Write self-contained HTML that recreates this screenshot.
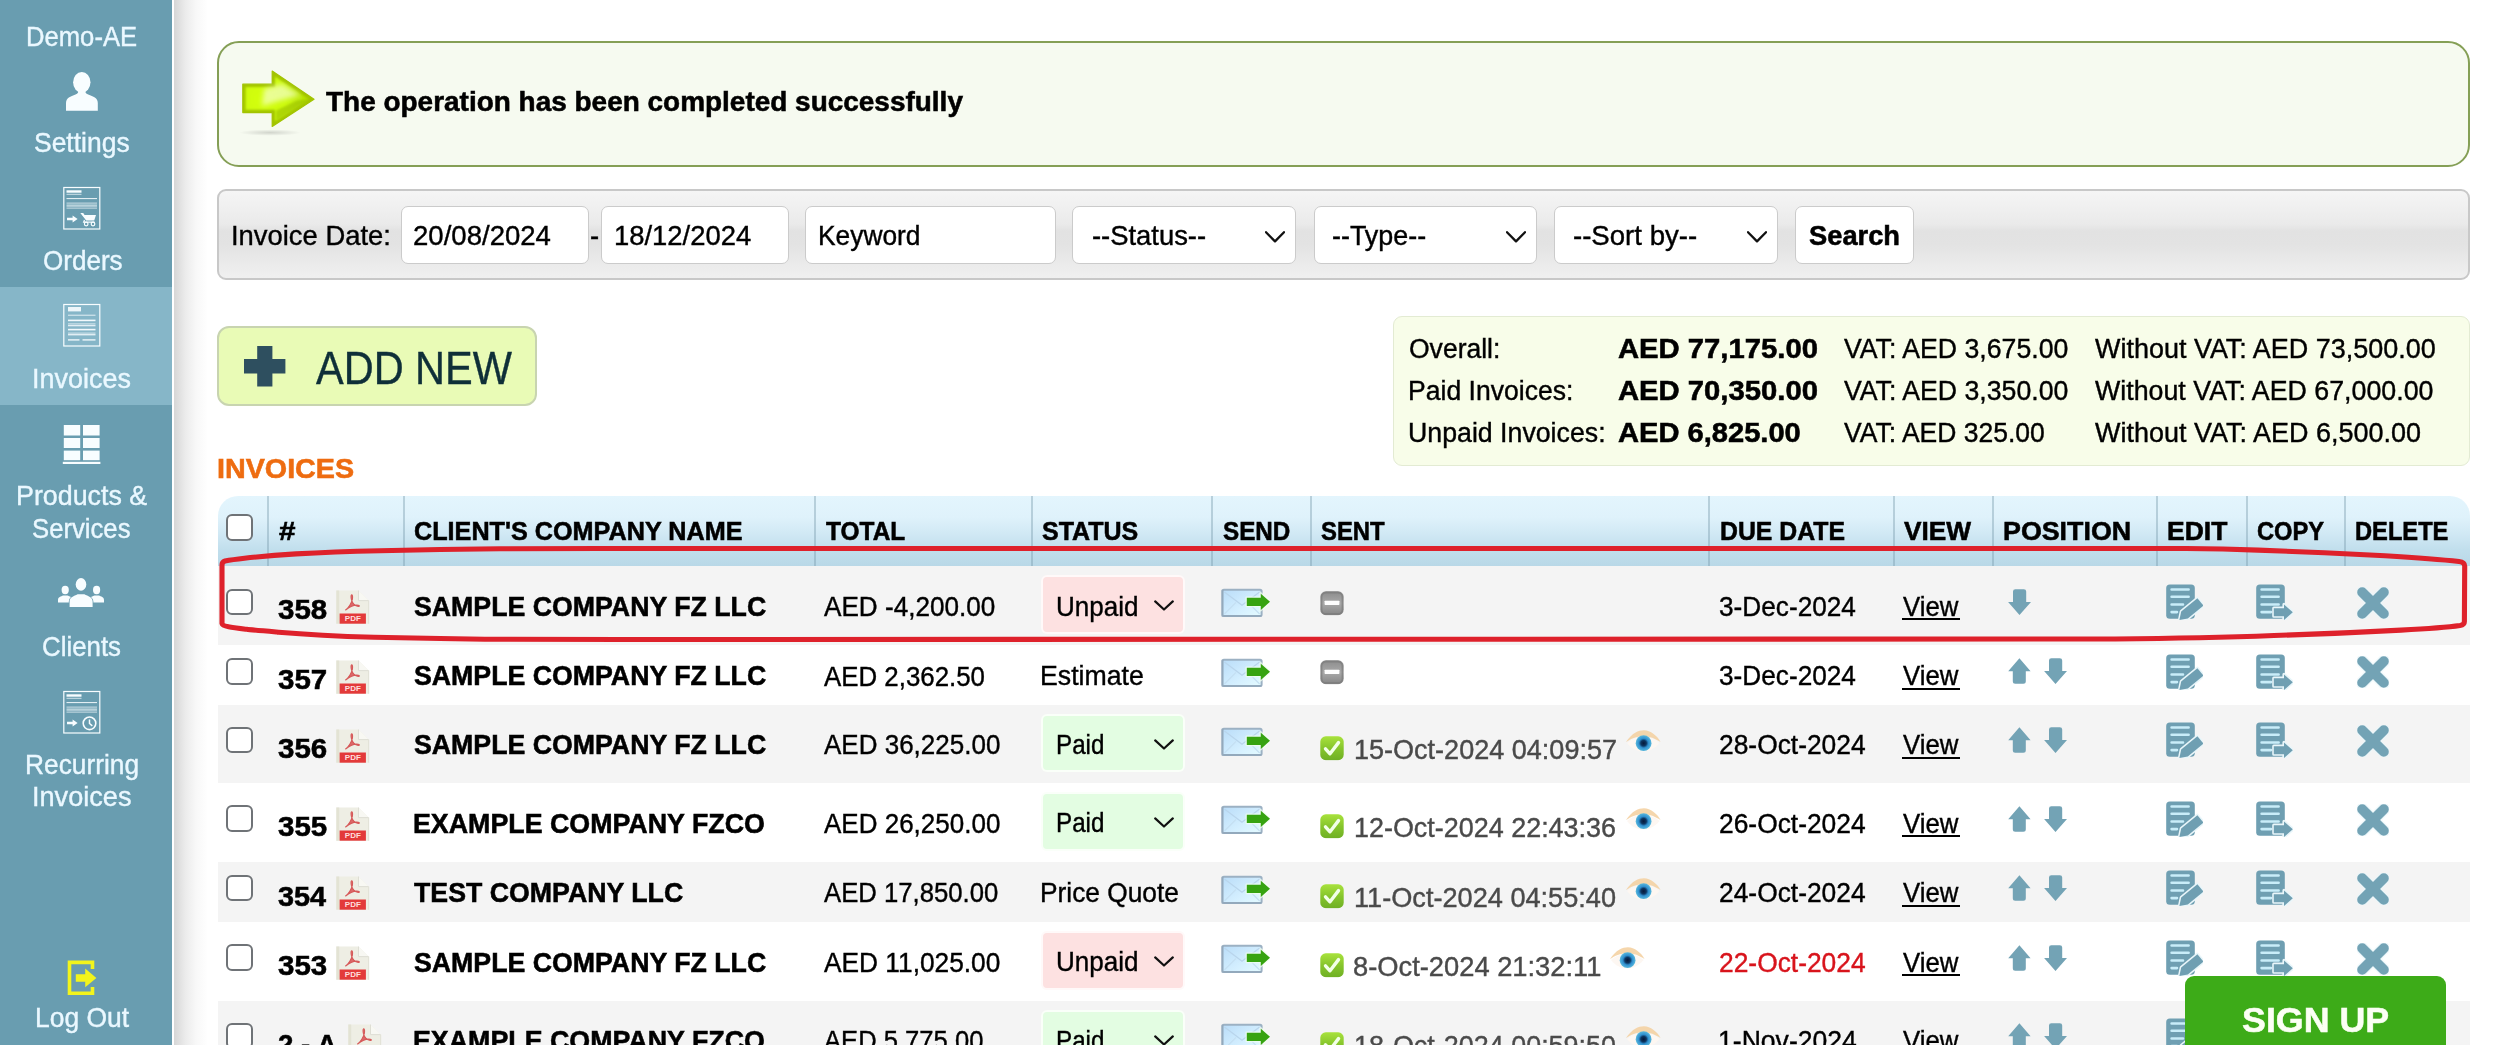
<!DOCTYPE html>
<html lang="en"><head><meta charset="utf-8"><title>Invoices</title>
<style>
html,body{margin:0;padding:0}
body{width:2515px;height:1045px;overflow:hidden;background:#fff;position:relative;
 font-family:"Liberation Sans",sans-serif;color:#000}
.a{position:absolute;box-sizing:border-box}
.t{position:absolute;white-space:nowrap;line-height:1;transform-origin:0 0;display:block;-webkit-text-stroke:.4px}
.t.b{-webkit-text-stroke:.55px}
.ul{position:absolute;height:2px;background:#000;display:block}
#side{left:0;top:0;width:172px;height:1045px;background:#699db0}
#act{left:0;top:287px;width:172px;height:118px;background:#86b6c8}
#shade{left:174px;top:0;width:34px;height:1045px;
 background:linear-gradient(90deg,#d6d6d6 0,#dedede 12%,#ececec 35%,#f8f8f8 65%,#fff 100%)}
#banner{left:217px;top:41px;width:2253px;height:125.5px;border:2px solid #859f56;border-radius:22px;background:#f6faf0}
#fbar{left:217px;top:189px;width:2253.4px;height:91.4px;border:2px solid #c8c8c8;border-radius:9px;
 background:linear-gradient(180deg,#f5f5f5 0,#eeeeee 25%,#eaeaea 38%,#e2e2e2 46%,#e3e3e3 62%,#eaeaea 82%,#f0f0f0 100%)}
.inp{background:#fff;border:1.5px solid #cbcbcb;border-radius:7px;top:205.5px;height:58px}
#addnew{left:217.2px;top:326px;width:320px;height:79.5px;border:2px solid #c8d4b0;border-radius:12px;background:#e9fbb6}
#sum{left:1392.5px;top:315.5px;width:1077.5px;height:150px;border:1.5px solid #e3ebd3;border-radius:9px;background:#f8fde9}
#thead{left:217.5px;top:496px;width:2252.5px;height:70px;border-radius:20px 20px 0 0;
 background:linear-gradient(180deg,#e3f5fd 0,#dff2fb 30%,#d0e8f4 55%,#c0deec 78%,#b9d8e7 100%)}
.sep{top:496px;width:2px;height:70px;background:rgba(125,158,175,.42)}
.row{left:217.5px;width:2252.5px;background:#f4f4f4}
.cb{left:226.4px;width:26.6px;height:26.6px;border:2.3px solid #6f7377;border-radius:6px;background:#fff}
.sel{left:1041.2px;width:143.4px;height:58.8px;border-radius:6px;border:2px solid rgba(255,255,255,.8)}
.sel.u{background:#fde1e1}
.sel.p{background:#e3fde2}
#signup{left:2185.4px;top:976px;width:260.8px;height:80px;border-radius:9px;background:#3dab18}
svg{position:absolute;overflow:visible}
</style></head><body>

<svg width="0" height="0" style="position:absolute">
<defs>
<linearGradient id="gArrow" x1="0" y1="0" x2="0" y2="1">
 <stop offset="0" stop-color="#a9d400"/><stop offset=".45" stop-color="#d6ff2a"/><stop offset="1" stop-color="#9fc800"/>
</linearGradient>
<linearGradient id="gEnv" x1="0" y1="0" x2="1" y2="1">
 <stop offset="0" stop-color="#b9dcf8"/><stop offset=".6" stop-color="#d4efff"/><stop offset="1" stop-color="#e4fbff"/>
</linearGradient>
<linearGradient id="gMinus" x1="0" y1="0" x2="0" y2="1">
 <stop offset="0" stop-color="#8c8c8c"/><stop offset=".5" stop-color="#a9a9a9"/><stop offset="1" stop-color="#858585"/>
</linearGradient>
<linearGradient id="gCheck" x1="0" y1="0" x2="0" y2="1">
 <stop offset="0" stop-color="#a8e23c"/><stop offset=".5" stop-color="#86c52c"/><stop offset="1" stop-color="#6fb024"/>
</linearGradient>
<radialGradient id="gIris" cx=".5" cy=".5" r=".5">
 <stop offset="0" stop-color="#06183a"/><stop offset=".35" stop-color="#0c3560"/><stop offset=".6" stop-color="#2f8fcf"/><stop offset="1" stop-color="#5ab8dc"/>
</radialGradient>

<symbol id="pdf" viewBox="0 0 34 34">
 <path d="M0.3 0.5H22.5L32.6 10.6V33.7H0.3Z" fill="#eeeee4"/>
 <path d="M0.3 0.5H3.2V33.7H0.3Z" fill="#e0e0cf" opacity=".8"/>
 <path d="M22.5 0.5L32.6 10.6H22.5Z" fill="#f8f8f3"/>
 <path d="M22.5 0.5V10.6H32.6" fill="none" stroke="#deded4" stroke-width="1"/>
 <path d="M32.6 10.6V33.7" fill="none" stroke="#e3e3d8" stroke-width="1.2"/>
 <path d="M9.6 20C12.6 17.6 15.2 13.6 16.3 9.6C16.8 7.4 16.6 4.9 15.8 4.8C14.9 4.7 14.8 7.2 15.5 9.8C16.6 13.6 19.2 16 22.4 16.4C23.6 16.5 23.8 15.4 22.4 15.2C19 14.7 14 16.2 9.6 20Z" fill="#dc6a6a" stroke="#d65a5a" stroke-width="1.1" stroke-linejoin="round"/>
 <rect x="3.6" y="23.5" width="26.3" height="10.2" fill="#e33a3a"/>
 <text x="16.8" y="31.4" font-family="Liberation Sans" font-weight="700" font-size="8" fill="#ffdede" text-anchor="middle">PDF</text>
</symbol>

<symbol id="send" viewBox="0 0 49 30">
 <rect x="1.4" y="1.7" width="39.2" height="26.2" rx="1.5" fill="url(#gEnv)" stroke="#9cb1c3" stroke-width="2"/>
 <path d="M1.4 27.9V1.7M0.6 27.9H40.6" fill="none" stroke="#8da3b6" stroke-width="2" opacity=".55"/>
 <path d="M3.4 4L21 17.2L38.6 4" fill="none" stroke="#b9d5ec" stroke-width="1.3"/>
 <path d="M3.4 26L15 14.4M38.6 26L27 14.4" fill="none" stroke="#c4dff2" stroke-width="1.1"/>
 <path d="M25.6 9.6H39.6V5.2L49.4 13.8L39.6 22.4V18.1H25.6Z" fill="#fff" opacity=".75" stroke="#f2fff0" stroke-width="2.2" stroke-linejoin="round"/>
 <path d="M25.8 9.7H39.8V5.7L49 13.8L39.8 21.9V18H25.8Z" fill="#37a311"/>
</symbol>

<symbol id="minus" viewBox="0 0 24 24.5">
 <rect x="0.3" y="0.3" width="23.4" height="23.9" rx="5.5" fill="url(#gMinus)"/>
 <rect x="1.6" y="1.6" width="20.8" height="21.3" rx="4.5" fill="none" stroke="#7a7a7a" stroke-width="1.6" opacity=".7"/>
 <rect x="4.6" y="9.7" width="14.8" height="4.2" rx=".6" fill="#fdfdfd"/>
</symbol>

<symbol id="check" viewBox="0 0 24 24.5">
 <rect x="0.3" y="0.3" width="23.4" height="23.9" rx="5.5" fill="url(#gCheck)"/>
 <path d="M5.5 12.8L10 17.8L18.5 6.6" fill="none" stroke="#f2ffe8" stroke-width="3.4" stroke-linecap="round" stroke-linejoin="round"/>
</symbol>

<symbol id="eye" viewBox="0 0 38 26">
 <path d="M2 13C8 4 15 1.2 20 1.3C26.5 1.5 32.8 6.4 36.6 13C31 9.6 26 7.2 19.2 7.2C12 7.2 7 9.8 2 13Z" fill="#f3cf9d" opacity=".85"/>
 <path d="M3 14C9 9 15 7.8 19.5 7.8C25 7.8 31 10 35.5 14C31 19.5 25 22.5 19.5 22.5C13 22.5 7 19 3 14Z" fill="#fdf7f2"/>
 <circle cx="19.6" cy="14.2" r="7.9" fill="url(#gIris)"/>
</symbol>

<symbol id="up" viewBox="0 0 23 26">
 <path d="M11.4 0.3L22.6 13.2H17.8V23.2Q17.8 25.7 15.3 25.7H7.3Q4.8 25.7 4.8 23.2V13.2H0.2Z" fill="#73a3b5"/>
</symbol>
<symbol id="down" viewBox="0 0 23 26">
 <path d="M11.5 26L23 13H18.2V2.6Q18.2 0.2 15.8 0.2H7.4Q5 0.2 5 2.6V13H0.1Z" fill="#73a3b5"/>
</symbol>

<symbol id="edit" viewBox="0 0 37 36">
 <rect x="0.2" y="0.4" width="28.6" height="34.4" rx="3.6" fill="#6f9fb2"/>
 <g stroke="#c9edf9" stroke-width="2.6" stroke-linecap="round">
  <path d="M5.6 5.5H22.6M5.6 12.8H22.6M5.6 20.5H17M5.6 28.1H11"/>
 </g>
 <path d="M13.4 36L15.2 27.4L31.4 14.2L37.6 21.6L21.8 34.6Z" fill="#6f9fb2" stroke="#e9f6fa" stroke-width="3" stroke-linejoin="round" paint-order="stroke"/>
</symbol>

<symbol id="copy" viewBox="0 0 37 36">
 <rect x="0.2" y="0.4" width="28.6" height="34.4" rx="3.6" fill="#6f9fb2"/>
 <g stroke="#c9edf9" stroke-width="2.6" stroke-linecap="round">
  <path d="M5.6 5.5H22.6M5.6 12.8H22.6M5.6 20.5H22.6M5.6 28.1H15"/>
 </g>
 <path d="M17.8 24.2H28V20.4L36.8 28.2L28 36V32.2H17.8Z" fill="#6f9fb2" stroke="#e9f6fa" stroke-width="3.2" stroke-linejoin="round" paint-order="stroke"/>
</symbol>

<symbol id="del" viewBox="0 0 32 32">
 <path d="M5.2 5.2L26.8 26.8M26.8 5.2L5.2 26.8" stroke="#e9f6fa" stroke-width="12.6" stroke-linecap="round" opacity=".7"/>
 <path d="M5.2 5.2L26.8 26.8M26.8 5.2L5.2 26.8" stroke="#73a3b5" stroke-width="10" stroke-linecap="round"/>
</symbol>

<symbol id="chev2" viewBox="0 0 20 12">
 <path d="M1.2 1.4L10 9.5L18.8 1.4" fill="none" stroke="#111" stroke-width="2.2" stroke-linecap="round" stroke-linejoin="round"/>
</symbol>
<symbol id="chev" viewBox="0 0 20 12">
 <path d="M1 1.2L10 10.4L19 1.2" fill="none" stroke="#111" stroke-width="2.3" stroke-linecap="round" stroke-linejoin="round"/>
</symbol>
</defs>
</svg>

<div class="a" id="side"></div><div class="a" id="act"></div><div class="a" id="shade"></div>
<svg style="left:60px;top:68px" width="44" height="46" viewBox="60 68 44 46">
 <ellipse cx="81.8" cy="82.3" rx="8.7" ry="10.4" fill="#f8fdff"/>
 <path d="M66 110.8V103C66 98 70.5 96.3 75.5 94.5C78 93.6 78.5 92 78.5 90H85.2C85.2 92 85.6 93.6 88.2 94.5C93.2 96.3 97.8 98 97.8 103V110.8Z" fill="#f8fdff"/>
</svg>
<svg style="left:60px;top:183.7px" width="44" height="50" viewBox="60 183.7 44 50">
<rect x="63.8" y="187.2" width="36" height="41.5" fill="none" stroke="#f8fdff" stroke-width="1.2"/>
<rect x="66.5" y="190.0" width="15" height="2.4" fill="#f8fdff"/>
<rect x="66.5" y="193.5" width="15" height="1" fill="#f8fdff" opacity=".7"/>
<rect x="66.5" y="197.7" width="30.5" height="1.1" fill="#f8fdff" opacity=".85"/>
<rect x="66.5" y="202.29999999999998" width="30.5" height="1" fill="#f8fdff" opacity=".7"/>
<rect x="66.5" y="204.1" width="30.5" height="2.4" fill="#f8fdff" opacity=".55"/>
<rect x="66.5" y="207.29999999999998" width="30.5" height="1" fill="#f8fdff" opacity=".7"/>
<path d="M67 217.5H72.6V215.1L77.6 218.7L72.6 222.29999999999998V219.89999999999998H67Z" fill="#f8fdff"/>
<path d="M80.3 212.7H83.2L84.6 214.7H96L94.2 220.1H86.2Z" fill="#f8fdff"/>
<path d="M84.5 219.7L83.6 221.89999999999998H94.5" fill="none" stroke="#f8fdff" stroke-width="1.2"/>
<circle cx="86.2" cy="223.7" r="1.8" fill="none" stroke="#f8fdff" stroke-width="1.2"/>
<circle cx="93" cy="223.7" r="1.8" fill="none" stroke="#f8fdff" stroke-width="1.2"/>
</svg>
<svg style="left:60px;top:301.2px" width="44" height="50" viewBox="60 301.2 44 50">
<rect x="63.8" y="304.7" width="36" height="41.5" fill="none" stroke="#f8fdff" stroke-width="1.2"/>
<rect x="68" y="307.2" width="13" height="4.4" fill="#f8fdff" opacity=".9"/>
<rect x="68" y="314.9" width="27.5" height="1" fill="#f8fdff" opacity="0.8"/>
<rect x="68" y="319.8" width="27.5" height="1.6" fill="#f8fdff" opacity="0.95"/>
<rect x="68" y="323.59999999999997" width="27.5" height="1" fill="#f8fdff" opacity="0.7"/>
<rect x="68" y="325.09999999999997" width="27.5" height="1.4" fill="#f8fdff" opacity="0.8"/>
<rect x="68" y="329.0" width="27.5" height="1.6" fill="#f8fdff" opacity="0.95"/>
<rect x="68" y="332.8" width="27.5" height="1" fill="#f8fdff" opacity="0.7"/>
<rect x="68" y="334.2" width="27.5" height="1.4" fill="#f8fdff" opacity="0.8"/>
<rect x="68" y="339.4" width="11.5" height="1.4" fill="#f8fdff" opacity=".9"/>
<rect x="82.5" y="339.4" width="13" height="1.4" fill="#f8fdff" opacity=".9"/>
</svg>
<svg style="left:60px;top:687.8px" width="44" height="50" viewBox="60 687.8 44 50">
<rect x="63.8" y="691.3" width="36" height="41.5" fill="none" stroke="#f8fdff" stroke-width="1.2"/>
<rect x="66.5" y="694.0999999999999" width="15" height="2.4" fill="#f8fdff"/>
<rect x="66.5" y="697.5999999999999" width="15" height="1" fill="#f8fdff" opacity=".7"/>
<rect x="66.5" y="701.8" width="30.5" height="1.1" fill="#f8fdff" opacity=".85"/>
<rect x="66.5" y="706.4" width="30.5" height="1" fill="#f8fdff" opacity=".7"/>
<rect x="66.5" y="708.1999999999999" width="30.5" height="2.4" fill="#f8fdff" opacity=".55"/>
<rect x="66.5" y="711.4" width="30.5" height="1" fill="#f8fdff" opacity=".7"/>
<path d="M67 721.5999999999999H72.6V719.1999999999999L77.6 722.8L72.6 726.4V724.0H67Z" fill="#f8fdff"/>
<circle cx="89.5" cy="723.0999999999999" r="6.3" fill="none" stroke="#f8fdff" stroke-width="1.6"/>
<path d="M89.5 719.1999999999999V723.3L92.3 725.5999999999999" fill="none" stroke="#f8fdff" stroke-width="1.5"/>
</svg>
<svg style="left:60px;top:422px" width="44" height="46" viewBox="60 422 44 46">
<rect x="63.8" y="425" width="16.4" height="10.5" fill="#f8fdff"/>
<rect x="63.8" y="438" width="16.4" height="10" fill="#f8fdff"/>
<rect x="63.8" y="450.6" width="16.4" height="9.6" fill="#f8fdff"/>
<rect x="83" y="425" width="16.6" height="10.5" fill="#f8fdff"/>
<rect x="83" y="438" width="16.6" height="10" fill="#f8fdff"/>
<rect x="83" y="450.6" width="16.6" height="9.6" fill="#f8fdff"/>
<rect x="62.8" y="461.8" width="37.6" height="2.2" fill="#f8fdff"/>
</svg>
<svg style="left:54px;top:574px" width="56" height="40" viewBox="54 574 56 40">
 <g fill="#f8fdff">
 <ellipse cx="65.2" cy="590" rx="3.6" ry="4.2"/>
 <path d="M58 602.4V600C58 597 61 596.6 63.2 595.6H67.4C69.6 596.6 72.6 597 72.6 600V602.4Z"/>
 <ellipse cx="96.6" cy="590" rx="3.6" ry="4.2"/>
 <path d="M89.4 602.4V600C89.4 597 92.4 596.6 94.6 595.6H98.8C101 596.6 104 597 104 600V602.4Z"/>
 </g>
 <g fill="#f8fdff" stroke="#699db0" stroke-width="1.6" paint-order="stroke">
 <ellipse cx="81" cy="584.4" rx="5.3" ry="6.3"/>
 <path d="M69.6 607V601.5C69.6 597 74 596 77.6 594.2H84.4C88 596 92.6 597 92.6 601.5V607Z"/>
 </g>
</svg>
<svg style="left:62px;top:955px" width="40" height="46" viewBox="62 955 40 46">
 <path d="M92.5 969V962.4H69.5V993.2H92.5V987" fill="none" stroke="#f2f41c" stroke-width="3.6"/>
 <path d="M75.8 974.2H85.2V968.6L96.4 978L85.2 987.2V981.8H75.8Z" fill="#f2f41c"/>
</svg>
<div class="a" id="banner"></div>
<svg style="left:236px;top:62px" width="90" height="80" viewBox="236 62 90 80">
 <defs><radialGradient id="gSh"><stop offset="0" stop-color="#000" stop-opacity=".15"/><stop offset="1" stop-color="#000" stop-opacity="0"/></radialGradient>
 <radialGradient id="gAin" cx="262" cy="99" r="46" gradientUnits="userSpaceOnUse"><stop offset="0" stop-color="#d4ff12"/><stop offset=".55" stop-color="#ccfa0c"/><stop offset="1" stop-color="#b4de04"/></radialGradient>
 <filter id="fBl" x="-30%" y="-30%" width="160%" height="160%"><feGaussianBlur stdDeviation="2.6"/></filter>
 <filter id="fBl2" x="-30%" y="-30%" width="160%" height="160%"><feGaussianBlur stdDeviation="1.2"/></filter></defs>
 <ellipse cx="270" cy="132.6" rx="31" ry="3.2" fill="url(#gSh)"/>
 <path d="M242.8 84.2H272.2V71L314 99.3L272.2 126.4V112.6H242.8Z" fill="#a2c400" stroke="#a2c400" stroke-width="1.2" stroke-linejoin="round"/>
 <path d="M245.6 87H275V76.4L309 99.3L275 121.2V109.8H245.6Z" fill="url(#gAin)" filter="url(#fBl2)"/>
 <path d="M276 110.5L297 100.4L309 99.4L276 120.6Z" fill="#9abe00" opacity=".6" filter="url(#fBl2)"/>
 <path d="M264 89L282 84L300 95L282 100L262 106Z" fill="#fff" opacity=".55" filter="url(#fBl)"/>
</svg>
<div class="a" id="fbar"></div>
<div class="a inp" style="left:401px;width:187.5px"></div>
<div class="a inp" style="left:601.2px;width:187.5px"></div>
<div class="a inp" style="left:805.2px;width:250.5px"></div>
<div class="a inp" style="left:1072.3px;width:224px"></div>
<div class="a inp" style="left:1313.6px;width:223.5px"></div>
<div class="a inp" style="left:1554.4px;width:224px"></div>
<div class="a inp" style="left:1794.8px;width:118.8px"></div>
<svg style="left:1264.5px;top:230.6px" width="20" height="12"><use href="#chev" width="20" height="12"/></svg>
<svg style="left:1506.0px;top:230.6px" width="20" height="12"><use href="#chev" width="20" height="12"/></svg>
<svg style="left:1747.0px;top:230.6px" width="20" height="12"><use href="#chev" width="20" height="12"/></svg>
<div class="a" id="addnew"></div>
<svg style="left:243.8px;top:346px" width="42" height="41"><path d="M13.2 0H28.4V13H41.4V27.6H28.4V40.6H13.2V27.6H0V13H13.2Z" fill="#2e4f5f"/></svg>
<div class="a" id="sum"></div>
<div class="a" id="thead"></div>
<div class="a sep" style="left:267px"></div>
<div class="a sep" style="left:403px"></div>
<div class="a sep" style="left:814px"></div>
<div class="a sep" style="left:1031px"></div>
<div class="a sep" style="left:1211px"></div>
<div class="a sep" style="left:1310px"></div>
<div class="a sep" style="left:1708px"></div>
<div class="a sep" style="left:1893px"></div>
<div class="a sep" style="left:1992px"></div>
<div class="a sep" style="left:2156px"></div>
<div class="a sep" style="left:2246px"></div>
<div class="a sep" style="left:2344px"></div>
<div class="a cb" style="top:514.4px"></div>
<div class="a row" style="top:565.8px;height:79.5px"></div>
<div class="a cb" style="top:588.5px"></div>
<svg style="left:336.0px;top:590.1px" width="34" height="34"><use href="#pdf" width="34" height="34"/></svg>
<div class="a sel u" style="top:575.2px"></div>
<svg style="left:1154.3px;top:600.3px" width="20" height="12"><use href="#chev2" width="20" height="12"/></svg>
<svg style="left:1220.6px;top:588.3px" width="49" height="30"><use href="#send" width="49" height="30"/></svg>
<svg style="left:1320.0px;top:590.8px" width="24" height="24.5"><use href="#minus" width="24" height="24.5"/></svg>
<svg style="left:2008.0px;top:588.8px" width="23" height="26"><use href="#down" width="23" height="26"/></svg>
<svg style="left:2165.7px;top:583.9px" width="37" height="36"><use href="#edit" width="37" height="36"/></svg>
<svg style="left:2255.7px;top:583.9px" width="37" height="36"><use href="#copy" width="37" height="36"/></svg>
<svg style="left:2356.8px;top:586.8px" width="32" height="32"><use href="#del" width="32" height="32"/></svg>
<div class="a cb" style="top:658.1px"></div>
<svg style="left:336.0px;top:659.7px" width="34" height="34"><use href="#pdf" width="34" height="34"/></svg>
<svg style="left:1220.6px;top:657.9px" width="49" height="30"><use href="#send" width="49" height="30"/></svg>
<svg style="left:1320.0px;top:660.3px" width="24" height="24.5"><use href="#minus" width="24" height="24.5"/></svg>
<svg style="left:2008.0px;top:658.3px" width="23" height="26"><use href="#up" width="23" height="26"/></svg>
<svg style="left:2043.8px;top:658.3px" width="23" height="26"><use href="#down" width="23" height="26"/></svg>
<svg style="left:2165.7px;top:653.5px" width="37" height="36"><use href="#edit" width="37" height="36"/></svg>
<svg style="left:2255.7px;top:653.5px" width="37" height="36"><use href="#copy" width="37" height="36"/></svg>
<svg style="left:2356.8px;top:656.3px" width="32" height="32"><use href="#del" width="32" height="32"/></svg>
<div class="a row" style="top:704.9px;height:78.0px"></div>
<div class="a cb" style="top:726.9px"></div>
<svg style="left:336.0px;top:728.5px" width="34" height="34"><use href="#pdf" width="34" height="34"/></svg>
<div class="a sel p" style="top:713.6px"></div>
<svg style="left:1154.3px;top:738.7px" width="20" height="12"><use href="#chev2" width="20" height="12"/></svg>
<svg style="left:1220.6px;top:726.7px" width="49" height="30"><use href="#send" width="49" height="30"/></svg>
<svg style="left:1320.1px;top:736.0px" width="24" height="24.5"><use href="#check" width="24" height="24.5"/></svg>
<svg style="left:1624.0px;top:728.7px" width="38" height="26"><use href="#eye" width="38" height="26"/></svg>
<svg style="left:2008.0px;top:727.1px" width="23" height="26"><use href="#up" width="23" height="26"/></svg>
<svg style="left:2043.8px;top:727.1px" width="23" height="26"><use href="#down" width="23" height="26"/></svg>
<svg style="left:2165.7px;top:722.3px" width="37" height="36"><use href="#edit" width="37" height="36"/></svg>
<svg style="left:2255.7px;top:722.3px" width="37" height="36"><use href="#copy" width="37" height="36"/></svg>
<svg style="left:2356.8px;top:725.1px" width="32" height="32"><use href="#del" width="32" height="32"/></svg>
<div class="a cb" style="top:805.3px"></div>
<svg style="left:336.0px;top:806.9px" width="34" height="34"><use href="#pdf" width="34" height="34"/></svg>
<div class="a sel p" style="top:792.0px"></div>
<svg style="left:1154.3px;top:817.1px" width="20" height="12"><use href="#chev2" width="20" height="12"/></svg>
<svg style="left:1220.6px;top:805.1px" width="49" height="30"><use href="#send" width="49" height="30"/></svg>
<svg style="left:1320.1px;top:814.4px" width="24" height="24.5"><use href="#check" width="24" height="24.5"/></svg>
<svg style="left:1624.0px;top:807.1px" width="38" height="26"><use href="#eye" width="38" height="26"/></svg>
<svg style="left:2008.0px;top:805.5px" width="23" height="26"><use href="#up" width="23" height="26"/></svg>
<svg style="left:2043.8px;top:805.5px" width="23" height="26"><use href="#down" width="23" height="26"/></svg>
<svg style="left:2165.7px;top:800.7px" width="37" height="36"><use href="#edit" width="37" height="36"/></svg>
<svg style="left:2255.7px;top:800.7px" width="37" height="36"><use href="#copy" width="37" height="36"/></svg>
<svg style="left:2356.8px;top:803.5px" width="32" height="32"><use href="#del" width="32" height="32"/></svg>
<div class="a row" style="top:861.8px;height:59.80000000000007px"></div>
<div class="a cb" style="top:874.7px"></div>
<svg style="left:336.0px;top:876.3px" width="34" height="34"><use href="#pdf" width="34" height="34"/></svg>
<svg style="left:1220.6px;top:874.5px" width="49" height="30"><use href="#send" width="49" height="30"/></svg>
<svg style="left:1320.1px;top:883.8px" width="24" height="24.5"><use href="#check" width="24" height="24.5"/></svg>
<svg style="left:1624.0px;top:876.5px" width="38" height="26"><use href="#eye" width="38" height="26"/></svg>
<svg style="left:2008.0px;top:874.9px" width="23" height="26"><use href="#up" width="23" height="26"/></svg>
<svg style="left:2043.8px;top:874.9px" width="23" height="26"><use href="#down" width="23" height="26"/></svg>
<svg style="left:2165.7px;top:870.1px" width="37" height="36"><use href="#edit" width="37" height="36"/></svg>
<svg style="left:2255.7px;top:870.1px" width="37" height="36"><use href="#copy" width="37" height="36"/></svg>
<svg style="left:2356.8px;top:872.9px" width="32" height="32"><use href="#del" width="32" height="32"/></svg>
<div class="a cb" style="top:944.3px"></div>
<svg style="left:336.0px;top:945.9px" width="34" height="34"><use href="#pdf" width="34" height="34"/></svg>
<div class="a sel u" style="top:931.0px"></div>
<svg style="left:1154.3px;top:956.1px" width="20" height="12"><use href="#chev2" width="20" height="12"/></svg>
<svg style="left:1220.6px;top:944.1px" width="49" height="30"><use href="#send" width="49" height="30"/></svg>
<svg style="left:1320.1px;top:953.4px" width="24" height="24.5"><use href="#check" width="24" height="24.5"/></svg>
<svg style="left:1608.2px;top:946.1px" width="38" height="26"><use href="#eye" width="38" height="26"/></svg>
<svg style="left:2008.0px;top:944.5px" width="23" height="26"><use href="#up" width="23" height="26"/></svg>
<svg style="left:2043.8px;top:944.5px" width="23" height="26"><use href="#down" width="23" height="26"/></svg>
<svg style="left:2165.7px;top:939.7px" width="37" height="36"><use href="#edit" width="37" height="36"/></svg>
<svg style="left:2255.7px;top:939.7px" width="37" height="36"><use href="#copy" width="37" height="36"/></svg>
<svg style="left:2356.8px;top:942.5px" width="32" height="32"><use href="#del" width="32" height="32"/></svg>
<div class="a row" style="top:1001px;height:77.59999999999991px"></div>
<div class="a cb" style="top:1022.8px"></div>
<svg style="left:348.0px;top:1024.4px" width="34" height="34"><use href="#pdf" width="34" height="34"/></svg>
<div class="a sel p" style="top:1009.5px"></div>
<svg style="left:1154.3px;top:1034.6px" width="20" height="12"><use href="#chev2" width="20" height="12"/></svg>
<svg style="left:1220.6px;top:1022.6px" width="49" height="30"><use href="#send" width="49" height="30"/></svg>
<svg style="left:1320.1px;top:1031.9px" width="24" height="24.5"><use href="#check" width="24" height="24.5"/></svg>
<svg style="left:1624.0px;top:1024.6px" width="38" height="26"><use href="#eye" width="38" height="26"/></svg>
<svg style="left:2008.0px;top:1023.0px" width="23" height="26"><use href="#up" width="23" height="26"/></svg>
<svg style="left:2043.8px;top:1023.0px" width="23" height="26"><use href="#down" width="23" height="26"/></svg>
<svg style="left:2165.7px;top:1018.2px" width="37" height="36"><use href="#edit" width="37" height="36"/></svg>
<svg style="left:2255.7px;top:1018.2px" width="37" height="36"><use href="#copy" width="37" height="36"/></svg>
<svg style="left:2356.8px;top:1021.0px" width="32" height="32"><use href="#del" width="32" height="32"/></svg>
<span class="t" style="left:25.63px;top:23.00px;font-size:27.4px;color:#eaf8ff;transform:scaleX(0.9359);">Demo-AE</span>
<span class="t" style="left:33.53px;top:128.60px;font-size:27.4px;color:#eaf8ff;transform:scaleX(0.9662);">Settings</span>
<span class="t" style="left:42.55px;top:247.00px;font-size:27.4px;color:#eaf8ff;transform:scaleX(0.9509);">Orders</span>
<span class="t" style="left:31.73px;top:365.30px;font-size:27.4px;color:#eaf8ff;transform:scaleX(0.9848);">Invoices</span>
<span class="t" style="left:15.94px;top:482.30px;font-size:27.4px;color:#eaf8ff;transform:scaleX(0.9794);">Products &amp;</span>
<span class="t" style="left:32.16px;top:515.40px;font-size:27.4px;color:#eaf8ff;transform:scaleX(0.9377);">Services</span>
<span class="t" style="left:42.16px;top:632.70px;font-size:27.4px;color:#eaf8ff;transform:scaleX(0.9435);">Clients</span>
<span class="t" style="left:24.58px;top:750.80px;font-size:27.4px;color:#eaf8ff;transform:scaleX(0.9609);">Recurring</span>
<span class="t" style="left:32.12px;top:783.40px;font-size:27.4px;color:#eaf8ff;transform:scaleX(0.9899);">Invoices</span>
<span class="t" style="left:34.57px;top:1004.40px;font-size:27.4px;color:#eaf8ff;transform:scaleX(0.9650);">Log Out</span>
<span class="t b" style="left:325.80px;top:87.70px;font-size:27.4px;font-weight:700;transform:scaleX(1.0206);">The operation has been completed successfully</span>
<span class="t" style="left:231.20px;top:222.00px;font-size:27.4px;transform:scaleX(1.0002);">Invoice Date:</span>
<span class="t" style="left:413.49px;top:222.00px;font-size:27.4px;transform:scaleX(1.0062);">20/08/2024</span>
<span class="t" style="left:589.50px;top:222.00px;font-size:27.4px;transform:scaleX(0.9995);">-</span>
<span class="t" style="left:614.20px;top:222.00px;font-size:27.4px;transform:scaleX(1.0010);">18/12/2024</span>
<span class="t" style="left:817.58px;top:222.00px;font-size:27.4px;transform:scaleX(0.9618);">Keyword</span>
<span class="t" style="left:1091.50px;top:222.00px;font-size:27.4px;transform:scaleX(0.9998);">--Status--</span>
<span class="t" style="left:1332.22px;top:222.00px;font-size:27.4px;transform:scaleX(0.9824);">--Type--</span>
<span class="t" style="left:1573.49px;top:222.00px;font-size:27.4px;transform:scaleX(1.0071);">--Sort by--</span>
<span class="t b" style="left:1808.50px;top:222.00px;font-size:27.4px;font-weight:700;transform:scaleX(0.9962);">Search</span>
<span class="t" style="left:315.50px;top:344.70px;font-size:46.5px;color:#0f2f38;transform:scaleX(0.8921);">ADD NEW</span>
<span class="t b" style="left:216.95px;top:454.50px;font-size:27.4px;font-weight:700;color:#ee6c10;transform:scaleX(1.0475);">INVOICES</span>
<span class="t" style="left:1409.42px;top:336.30px;font-size:27.0px;transform:scaleX(0.9820);">Overall:</span>
<span class="t" style="left:1408.43px;top:378.40px;font-size:27.0px;transform:scaleX(0.9836);">Paid Invoices:</span>
<span class="t" style="left:1408.42px;top:419.80px;font-size:27.0px;transform:scaleX(0.9897);">Unpaid Invoices:</span>
<span class="t b" style="left:1617.50px;top:336.30px;font-size:27.0px;font-weight:700;transform:scaleX(1.0827);">AED 77,175.00</span>
<span class="t b" style="left:1617.50px;top:378.40px;font-size:27.0px;font-weight:700;transform:scaleX(1.0827);">AED 70,350.00</span>
<span class="t b" style="left:1617.50px;top:419.80px;font-size:27.0px;font-weight:700;transform:scaleX(1.0777);">AED 6,825.00</span>
<span class="t" style="left:1844.40px;top:336.30px;font-size:27.0px;transform:scaleX(0.9875);">VAT: AED 3,675.00</span>
<span class="t" style="left:1844.40px;top:378.40px;font-size:27.0px;transform:scaleX(0.9875);">VAT: AED 3,350.00</span>
<span class="t" style="left:1844.40px;top:419.80px;font-size:27.0px;transform:scaleX(0.9813);">VAT: AED 325.00</span>
<span class="t" style="left:2094.80px;top:336.30px;font-size:27.0px;transform:scaleX(0.9986);">Without VAT: AED 73,500.00</span>
<span class="t" style="left:2094.80px;top:378.40px;font-size:27.0px;transform:scaleX(0.9921);">Without VAT: AED 67,000.00</span>
<span class="t" style="left:2094.80px;top:419.80px;font-size:27.0px;transform:scaleX(0.9992);">Without VAT: AED 6,500.00</span>
<span class="t b" style="left:279.40px;top:519.00px;font-size:25.8px;font-weight:700;transform:scaleX(1.1490);">#</span>
<span class="t b" style="left:413.52px;top:519.00px;font-size:25.8px;font-weight:700;transform:scaleX(0.9768);">CLIENT'S COMPANY NAME</span>
<span class="t b" style="left:825.50px;top:519.00px;font-size:25.8px;font-weight:700;transform:scaleX(0.9477);">TOTAL</span>
<span class="t b" style="left:1041.80px;top:519.00px;font-size:25.8px;font-weight:700;transform:scaleX(0.9692);">STATUS</span>
<span class="t b" style="left:1223.10px;top:519.00px;font-size:25.8px;font-weight:700;transform:scaleX(0.9401);">SEND</span>
<span class="t b" style="left:1321.10px;top:519.00px;font-size:25.8px;font-weight:700;transform:scaleX(0.9254);">SENT</span>
<span class="t b" style="left:1719.54px;top:519.00px;font-size:25.8px;font-weight:700;transform:scaleX(0.9616);">DUE DATE</span>
<span class="t b" style="left:1904.00px;top:519.00px;font-size:25.8px;font-weight:700;transform:scaleX(1.0167);">VIEW</span>
<span class="t b" style="left:2003.06px;top:519.00px;font-size:25.8px;font-weight:700;transform:scaleX(1.0394);">POSITION</span>
<span class="t b" style="left:2167.07px;top:519.00px;font-size:25.8px;font-weight:700;transform:scaleX(1.0274);">EDIT</span>
<span class="t b" style="left:2256.98px;top:519.00px;font-size:25.8px;font-weight:700;transform:scaleX(0.9179);">COPY</span>
<span class="t b" style="left:2354.78px;top:519.00px;font-size:25.8px;font-weight:700;transform:scaleX(0.9179);">DELETE</span>
<span class="t b" style="left:277.80px;top:596.35px;font-size:27.4px;font-weight:700;transform:scaleX(1.0754);">358</span>
<span class="t b" style="left:413.50px;top:592.85px;font-size:27.3px;font-weight:700;transform:scaleX(0.9785);">SAMPLE COMPANY FZ LLC</span>
<span class="t" style="left:824.30px;top:593.05px;font-size:27.3px;transform:scaleX(0.9571);">AED -4,200.00</span>
<span class="t" style="left:1055.79px;top:592.55px;font-size:27.3px;transform:scaleX(0.9528);">Unpaid</span>
<span class="t" style="left:1718.94px;top:592.75px;font-size:27.3px;transform:scaleX(0.9600);">3-Dec-2024</span>
<span class="t" style="left:1903.00px;top:592.75px;font-size:27.3px;transform:scaleX(0.9445);">View</span><i class="ul" style="left:1902.0px;top:618.4px;width:57.7px"></i>
<span class="t b" style="left:277.80px;top:665.90px;font-size:27.4px;font-weight:700;transform:scaleX(1.0754);">357</span>
<span class="t b" style="left:413.50px;top:662.40px;font-size:27.3px;font-weight:700;transform:scaleX(0.9785);">SAMPLE COMPANY FZ LLC</span>
<span class="t" style="left:824.30px;top:662.60px;font-size:27.3px;transform:scaleX(0.9471);">AED 2,362.50</span>
<span class="t" style="left:1039.85px;top:662.10px;font-size:27.3px;transform:scaleX(0.9775);">Estimate</span>
<span class="t" style="left:1718.94px;top:662.30px;font-size:27.3px;transform:scaleX(0.9600);">3-Dec-2024</span>
<span class="t" style="left:1903.00px;top:662.30px;font-size:27.3px;transform:scaleX(0.9445);">View</span><i class="ul" style="left:1902.0px;top:687.9px;width:57.7px"></i>
<span class="t b" style="left:277.80px;top:734.70px;font-size:27.4px;font-weight:700;transform:scaleX(1.0754);">356</span>
<span class="t b" style="left:413.50px;top:731.20px;font-size:27.3px;font-weight:700;transform:scaleX(0.9785);">SAMPLE COMPANY FZ LLC</span>
<span class="t" style="left:824.30px;top:731.40px;font-size:27.3px;transform:scaleX(0.9526);">AED 36,225.00</span>
<span class="t" style="left:1055.93px;top:730.90px;font-size:27.3px;transform:scaleX(0.8861);">Paid</span>
<span class="t" style="left:1353.73px;top:735.70px;font-size:27.4px;color:#4a4a4a;transform:scaleX(0.9869);">15-Oct-2024 04:09:57</span>
<span class="t" style="left:1718.93px;top:731.10px;font-size:27.3px;transform:scaleX(0.9664);">28-Oct-2024</span>
<span class="t" style="left:1903.00px;top:731.10px;font-size:27.3px;transform:scaleX(0.9445);">View</span><i class="ul" style="left:1902.0px;top:756.7px;width:57.7px"></i>
<span class="t b" style="left:277.80px;top:813.15px;font-size:27.4px;font-weight:700;transform:scaleX(1.0754);">355</span>
<span class="t b" style="left:412.52px;top:809.65px;font-size:27.3px;font-weight:700;transform:scaleX(0.9816);">EXAMPLE COMPANY FZCO</span>
<span class="t" style="left:824.30px;top:809.85px;font-size:27.3px;transform:scaleX(0.9526);">AED 26,250.00</span>
<span class="t" style="left:1055.93px;top:809.35px;font-size:27.3px;transform:scaleX(0.8861);">Paid</span>
<span class="t" style="left:1353.73px;top:814.15px;font-size:27.4px;color:#4a4a4a;transform:scaleX(0.9832);">12-Oct-2024 22:43:36</span>
<span class="t" style="left:1718.93px;top:809.55px;font-size:27.3px;transform:scaleX(0.9664);">26-Oct-2024</span>
<span class="t" style="left:1903.00px;top:809.55px;font-size:27.3px;transform:scaleX(0.9445);">View</span><i class="ul" style="left:1902.0px;top:835.1px;width:57.7px"></i>
<span class="t b" style="left:277.80px;top:882.50px;font-size:27.4px;font-weight:700;transform:scaleX(1.0523);">354</span>
<span class="t b" style="left:413.50px;top:879.00px;font-size:27.3px;font-weight:700;transform:scaleX(0.9789);">TEST COMPANY LLC</span>
<span class="t" style="left:824.30px;top:879.20px;font-size:27.3px;transform:scaleX(0.9417);">AED 17,850.00</span>
<span class="t" style="left:1039.87px;top:878.70px;font-size:27.3px;transform:scaleX(0.9634);">Price Quote</span>
<span class="t" style="left:1353.72px;top:883.50px;font-size:27.4px;color:#4a4a4a;transform:scaleX(0.9908);">11-Oct-2024 04:55:40</span>
<span class="t" style="left:1718.93px;top:878.90px;font-size:27.3px;transform:scaleX(0.9664);">24-Oct-2024</span>
<span class="t" style="left:1903.00px;top:878.90px;font-size:27.3px;transform:scaleX(0.9445);">View</span><i class="ul" style="left:1902.0px;top:904.5px;width:57.7px"></i>
<span class="t b" style="left:277.80px;top:952.10px;font-size:27.4px;font-weight:700;transform:scaleX(1.0754);">353</span>
<span class="t b" style="left:413.50px;top:948.60px;font-size:27.3px;font-weight:700;transform:scaleX(0.9785);">SAMPLE COMPANY FZ LLC</span>
<span class="t" style="left:824.30px;top:948.80px;font-size:27.3px;transform:scaleX(0.9631);">AED 11,025.00</span>
<span class="t" style="left:1055.79px;top:948.30px;font-size:27.3px;transform:scaleX(0.9528);">Unpaid</span>
<span class="t" style="left:1352.50px;top:953.10px;font-size:27.4px;color:#4a4a4a;transform:scaleX(0.9968);">8-Oct-2024 21:32:11</span>
<span class="t" style="left:1718.93px;top:948.50px;font-size:27.3px;color:#d8141c;transform:scaleX(0.9664);">22-Oct-2024</span>
<span class="t" style="left:1903.00px;top:948.50px;font-size:27.3px;transform:scaleX(0.9445);">View</span><i class="ul" style="left:1902.0px;top:974.1px;width:57.7px"></i>
<span class="t b" style="left:277.80px;top:1030.60px;font-size:27.4px;font-weight:700;transform:scaleX(1.0092);">2 - A</span>
<span class="t b" style="left:412.52px;top:1027.10px;font-size:27.3px;font-weight:700;transform:scaleX(0.9816);">EXAMPLE COMPANY FZCO</span>
<span class="t" style="left:824.30px;top:1027.30px;font-size:27.3px;transform:scaleX(0.9376);">AED 5,775.00</span>
<span class="t" style="left:1055.93px;top:1026.80px;font-size:27.3px;transform:scaleX(0.8861);">Paid</span>
<span class="t" style="left:1353.73px;top:1031.60px;font-size:27.4px;color:#4a4a4a;transform:scaleX(0.9832);">18-Oct-2024 00:59:50</span>
<span class="t" style="left:1717.95px;top:1027.00px;font-size:27.3px;transform:scaleX(0.9739);">1-Nov-2024</span>
<span class="t" style="left:1903.00px;top:1027.00px;font-size:27.3px;transform:scaleX(0.9445);">View</span><i class="ul" style="left:1902.0px;top:1052.6px;width:57.7px"></i>
<svg style="left:0;top:0" width="2515" height="1045" viewBox="0 0 2515 1045">
 <path d="M222 623.6 L222 565 Q222 562 225 561 C232 559.6 240 558.7 244.5 558.2 C262 556.3 280 554.9 296 553.9 C320 552.6 350 551.5 380 550.8 C420 549.7 460 549 500 548.7 L600 548.5 L2186 548.5 C2215 548.7 2240 549.4 2258 550.1 C2290 551.2 2350 553.8 2385 555.7 C2410 557.2 2440 559.3 2459 561.5 Q2464.6 562.2 2464.7 566 L2464.4 621.6 Q2464.4 624.8 2460 625.6 C2445 627.8 2420 629.2 2401 630.1 C2370 631.8 2310 634.4 2274 635.5 C2240 636.8 2180 638.4 2115 639 L620 639.5 C560 639.5 520 639.4 485 639.2 C450 638.6 400 637.8 374 637.3 C345 636.4 300 634 278.6 632.2 C262 630.8 250 629.8 246.8 629.3 C232 627.6 222.6 626.6 222 623.6 Z"
  fill="none" stroke="#de212b" stroke-width="5.1" stroke-linejoin="round"/>
</svg>
<div class="a" id="signup"></div>
<span class="t b" style="left:2241.69px;top:1002.60px;font-size:35.6px;font-weight:700;color:#fbfff4;transform:scaleX(1.0065);">SIGN UP</span>
</body></html>
